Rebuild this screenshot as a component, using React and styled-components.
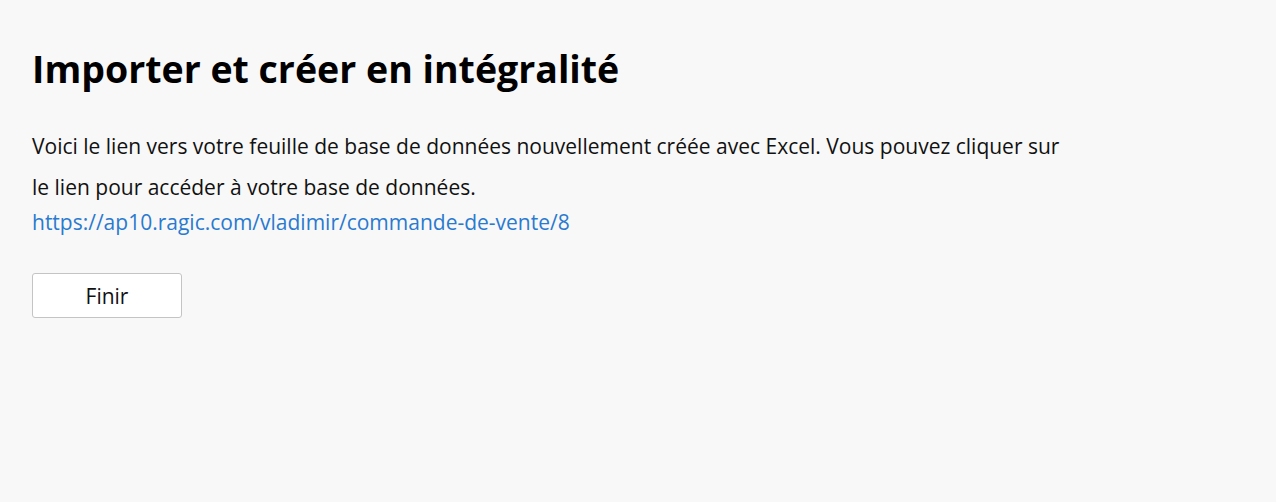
import styled, { createGlobalStyle } from "styled-components";

const GlobalStyle = createGlobalStyle`
  html, body {
    margin: 0;
    padding: 0;
    background-color: #f8f8f8;
  }
  body {
    font-family: "Open Sans", "Liberation Sans", sans-serif;
    color: #111;
  }
`;

const Page = styled.main`
  min-height: 502px;
  padding: 44px 32px 0;
  box-sizing: border-box;
`;

const Title = styled.h1`
  font-size: 37.5px;
  font-weight: 700;
  color: #000;
  margin: 0 0 32px;
  line-height: 50px;
`;

const Message = styled.p`
  font-size: 21px;
  line-height: 41px;
  max-width: 1040px;
  margin: 0;
  color: #111;
`;

const LinkLine = styled.a`
  display: block;
  font-size: 21px;
  line-height: 28px;
  color: #2a7ad0;
  text-decoration: none;
  margin-bottom: 37px;
`;

const Button = styled.button`
  width: 150px;
  height: 45px;
  background: #fff;
  border: 1px solid #c4c4c4;
  border-radius: 3px;
  font-family: "Open Sans", "Liberation Sans", sans-serif;
  font-size: 21px;
  color: #111;
  cursor: pointer;
`;

function App() {
  return (
    <>
      <GlobalStyle />
      <Page>
        <Title>Importer et créer en intégralité</Title>
        <Message>
          Voici le lien vers votre feuille de base de données nouvellement
          créée avec Excel. Vous pouvez cliquer sur le lien pour accéder à
          votre base de données.
        </Message>
        <LinkLine href="#">https://ap10.ragic.com/vladimir/commande-de-vente/8</LinkLine>
        <Button>Finir</Button>
      </Page>
    </>
  );
}

export default App;
